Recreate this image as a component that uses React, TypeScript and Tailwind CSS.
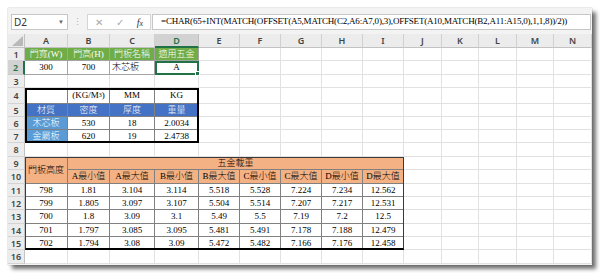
import React from "react";

type Cell = { t?: React.ReactNode; c: string };

const ROW = [
  "", "row-start-1", "row-start-2", "row-start-3", "row-start-4", "row-start-5", "row-start-6",
  "row-start-7", "row-start-8", "row-start-9", "row-start-10", "row-start-11", "row-start-12",
  "row-start-13", "row-start-14", "row-start-15", "row-start-16", "row-start-17",
];
const COL = [
  "", "col-start-1", "col-start-2", "col-start-3", "col-start-4", "col-start-5", "col-start-6",
  "col-start-7", "col-start-8", "col-start-9", "col-start-10", "col-start-11", "col-start-12",
  "col-start-13", "col-start-14", "col-start-15",
];
const LETTERS = ["A", "B", "C", "D", "E", "F", "G", "H", "I", "J", "K", "L", "M", "N"];

const GRID = "bg-white border-r border-b border-[#e1e1e1] justify-center";
const GREEN = "bg-[#70ad47] text-white border-r border-b border-[#a3a3a3] justify-center";
const TOP2 = "bg-white text-black border-r border-b border-[#a3a3a3] justify-center";
const TOP2L = "bg-white text-black border-r border-b border-[#a3a3a3] justify-start pl-[2px]";
const MID = "bg-white text-black border-r border-b border-[#808080] justify-center";
const BLUE = "bg-[#4472c4] text-white border-r border-b border-[#808080] justify-center";
const LBLUE = "bg-[#5b9bd5] text-white border-r border-b border-[#808080] justify-center";
const ORANGE = "bg-[#f4b183] text-black border-r border-b border-[#808080] justify-center";

const cells: Record<string, Cell> = {};
const put = (r: number, c: number, t: React.ReactNode, cls: string) => {
  cells[`${r}-${c}`] = { t, c: cls };
};

["門寬(W)", "門高(H)", "門板名稱", "適用五金"].forEach((t, i) => put(1, i + 1, t, GREEN));
put(2, 1, "300", TOP2);
put(2, 2, "700", TOP2);
put(2, 3, "木芯板", TOP2L);
put(2, 4, "A", TOP2);

put(4, 1, "", MID);
put(4, 2, <span>(KG/M<sup className="text-[6px] relative -top-[1px]">3</sup>)</span>, MID);
put(4, 3, "MM", MID);
put(4, 4, "KG", MID);
["材質", "密度", "厚度", "重量"].forEach((t, i) => put(5, i + 1, t, BLUE));
put(6, 1, "木芯板", LBLUE);
put(6, 2, "530", MID);
put(6, 3, "18", MID);
put(6, 4, "2.0034", MID);
put(7, 1, "金屬板", LBLUE);
put(7, 2, "620", MID);
put(7, 3, "19", MID);
put(7, 4, "2.4738", MID);

put(9, 1, "門板高度", ORANGE + " row-span-2");
put(9, 2, "五金載重", ORANGE + " col-span-8");
["A最小值", "A最大值", "B最小值", "B最大值", "C最小值", "C最大值", "D最小值", "D最大值"].forEach((t, i) =>
  put(10, i + 2, t, ORANGE)
);
const data = [
  ["798", "1.81", "3.104", "3.114", "5.518", "5.528", "7.224", "7.234", "12.562"],
  ["799", "1.805", "3.097", "3.107", "5.504", "5.514", "7.207", "7.217", "12.531"],
  ["700", "1.8", "3.09", "3.1", "5.49", "5.5", "7.19", "7.2", "12.5"],
  ["701", "1.797", "3.085", "3.095", "5.481", "5.491", "7.178", "7.188", "12.479"],
  ["702", "1.794", "3.08", "3.09", "5.472", "5.482", "7.166", "7.176", "12.458"],
];
data.forEach((row, ri) => row.forEach((t, ci) => put(11 + ri, ci + 1, t, MID)));

const covered = new Set<string>(["10-1", "9-3", "9-4", "9-5", "9-6", "9-7", "9-8", "9-9"]);

const FORMULA =
  "=CHAR(65+INT(MATCH(OFFSET(A5,MATCH(C2,A6:A7,0),3),OFFSET(A10,MATCH(B2,A11:A15,0),1,1,8))/2))";

export default function App() {
  const body: React.ReactNode[] = [];
  for (let r = 1; r <= 16; r++) {
    const sel = r === 2;
    body.push(
      <div
        key={`rh-${r}`}
        className={`${ROW[r + 1]} col-start-1 flex items-center justify-center text-[9px] font-semibold leading-none font-['Noto_Sans',sans-serif] ${
          sel
            ? "bg-[#d2d2d2] text-[#217346] border-b border-[#c8c8c8] border-r-2 border-r-[#217346]"
            : "bg-[#ececec] text-[#444] border-b border-[#d4d4d4] border-r border-r-[#c2c2c2]"
        }`}
      >
        {r}
      </div>
    );
    for (let c = 1; c <= 14; c++) {
      const key = `${r}-${c}`;
      if (covered.has(key)) continue;
      const cell = cells[key];
      body.push(
        <div
          key={key}
          className={`${ROW[r + 1]} ${COL[c + 1]} flex items-center overflow-hidden whitespace-nowrap leading-none font-light ${
            cell ? cell.c : GRID
          }`}
        >
          {cell?.t}
        </div>
      );
    }
  }

  return (
    <div className="w-[600px] h-[273px] bg-white pl-[8px] pt-[8px]">
      <div
        className="w-[584px] h-[257px] bg-[#f3f3f3] flex flex-col shadow-[0_0_1px_rgba(0,0,0,0.45),4px_4px_4px_rgba(0,0,0,0.55)]"
        style={{ fontFamily: '"Liberation Serif", "Noto Sans CJK TC", serif' }}
      >
        {/* formula bar */}
        <div className="h-[26px] flex items-start pt-[6px] pl-[3px] pr-[1px]">
          <div className="w-[57px] h-[16px] bg-white border border-[#c6c6c6] flex items-center justify-between pl-[2px] pr-[3px] text-[10px] text-[#333] font-['Noto_Sans',sans-serif]">
            <span>D2</span>
            <span className="text-[6px] text-[#666]">▼</span>
          </div>
          <div className="w-[19px] h-[16px] flex items-center justify-center text-[9px] text-[#b0b0b0] leading-none">⋮</div>
          <div className="w-[64px] h-[16px] bg-white border border-[#d4d4d4] flex items-center text-[#a8a8a8] font-['Noto_Sans',sans-serif]">
            <span className="w-[22px] text-center text-[10px]">✕</span>
            <span className="w-[20px] text-center text-[10px]">✓</span>
            <span className="w-[20px] text-center text-[10px] italic text-[#333] font-['Liberation_Serif',serif]">
              f<span className="text-[8px]">x</span>
            </span>
          </div>
          <div className="flex-1 ml-[1px] h-[16px] bg-white border border-[#c6c6c6] flex items-center pl-[8px] text-[9px] text-black whitespace-nowrap overflow-hidden tracking-[-0.2px]">
            {FORMULA}
          </div>
        </div>
        {/* sheet */}
        <div className="grid grid-cols-[17px_43px_42px_45px_44px_41px_41px_41px_41px_41px_38px_37px_38px_37px_38px] grid-rows-[14px_13px_14px_13px_16px_13px_13px_13px_14px_13px_14px_13px_13px_14px_13px_13px_14px] text-[9px] text-black">
          <div className="row-start-1 col-start-1 bg-[#ececec] border-r border-b border-[#c2c2c2] flex items-end justify-end p-[1px]">
            <svg width="11" height="10" viewBox="0 0 11 10">
              <polygon points="11,0 11,10 0,10" fill="#b9b9b9" />
            </svg>
          </div>
          {LETTERS.map((l, i) => (
            <div
              key={l}
              className={`row-start-1 ${COL[i + 2]} flex items-center justify-center text-[9px] font-semibold leading-none font-['Noto_Sans',sans-serif] ${
                l === "D"
                  ? "bg-[#d2d2d2] text-[#217346] border-r border-[#c2c2c2] border-b-2 border-b-[#217346]"
                  : "bg-[#ececec] text-[#444] border-r border-[#d0d0d0] border-b border-b-[#c2c2c2]"
              }`}
            >
              {l}
            </div>
          ))}
          {body}
          {/* table outlines */}
          <div className="row-start-5 row-end-9 col-start-2 col-end-6 border-2 border-black pointer-events-none" />
          <div className="row-start-10 row-end-17 col-start-2 col-end-11 border border-[#3a3a3a] border-b-2 border-b-black pointer-events-none" />
          {/* selected cell D2 */}
          <div className="row-start-3 col-start-5 relative border-2 border-[#217346] pointer-events-none">
            <div className="absolute -right-[3px] -bottom-[3px] w-[5px] h-[5px] bg-[#217346] border border-white" />
          </div>
        </div>
      </div>
    </div>
  );
}
